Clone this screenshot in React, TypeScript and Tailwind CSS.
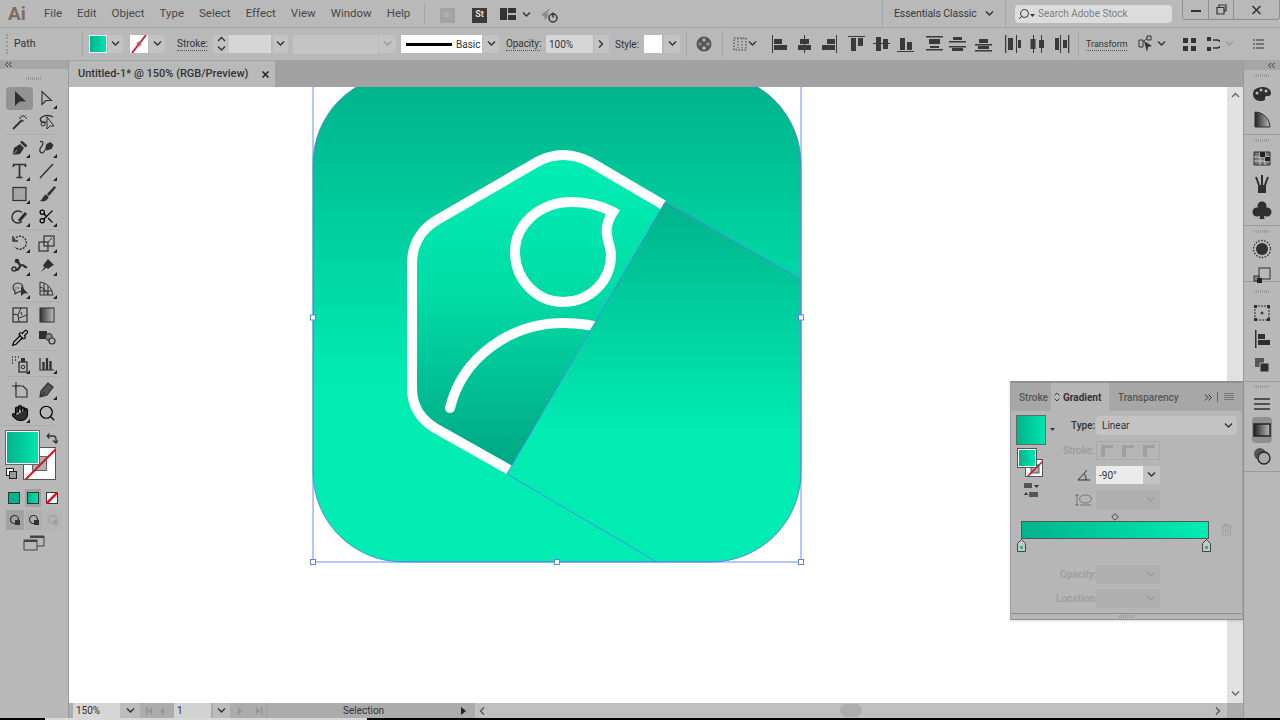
import React from "react";
import { Scissors, Hand, Search, Pipette, Trash2 } from "lucide-react";

const DK = "#2f2f2f";

function Chev({ c = "#333", dir = "down" }: { c?: string; dir?: "down" | "up" | "right" | "left" }) {
  const d = { down: "M1 1.5l3.5 3.5L8 1.5", up: "M1 5l3.5-3.5L8 5", right: "M2 0.5l3.5 3.5L2 7.5", left: "M6 0.5L2.5 4L6 7.5" }[dir];
  return (
    <svg width="9" height="8" viewBox="0 0 9 8" fill="none" className="shrink-0">
      <path d={d} stroke={c} strokeWidth="1.4" />
    </svg>
  );
}

function Sep() {
  return <div className="w-px h-[26px] bg-[#a4a4a4] shrink-0" />;
}

function ChevBox({ className = "", c = "#333" }: { className?: string; c?: string }) {
  return (
    <div className={"h-[18px] bg-[#c3c3c3] flex items-center justify-center rounded-r-sm shrink-0 " + className}>
      <Chev c={c} />
    </div>
  );
}

const Dots = () => <div className="w-[16px] h-[3px] bg-[repeating-linear-gradient(90deg,#9a9a9a_0,#9a9a9a_1px,transparent_1px,transparent_2px)]" />;

function TitleBar() {
  const menu = ["File", "Edit", "Object", "Type", "Select", "Effect", "View", "Window", "Help"];
  return (
    <div className="h-[27px] bg-[#b9b9b9] flex items-center relative shrink-0">
      <div className="w-[44px] pl-[8px] text-[19px] font-bold leading-none text-[#7f6d5a] shrink-0">Ai</div>
      <div className="flex gap-[15px] text-[11.5px] text-[#484848]">
        {menu.map((m) => (
          <span key={m}>{m}</span>
        ))}
      </div>
      <div className="absolute left-[424px] top-[3px] w-px h-[22px] bg-[#a6a6a6]" />
      <div className="absolute left-[440px] top-[6px] flex items-center">
        <div className="w-[15px] h-[15px] bg-[#a3a3a3] text-[8px] font-bold text-[#b5b5b5] flex items-center justify-center">Br</div>
        <div className="ml-[17px] w-[15px] h-[15px] bg-[#3a3a3a] text-[9px] font-bold text-[#ddd] flex items-center justify-center">St</div>
        <svg width="16" height="12" viewBox="0 0 16 12" className="ml-[13px] shrink-0 -mt-[2px]">
          <path d="M0 0h7v12H0zM8 0h8v5H8zM8 7h8v5H8z" fill="#333" />
        </svg>
        <div className="ml-[6px]"><Chev /></div>
        <svg width="18" height="18" viewBox="0 0 18 18" className="ml-[9px] shrink-0">
          <path d="M1 9l9-7-3 6 2 1-4 5-1-4z" fill="#8d8d8d" />
          <circle cx="13" cy="12" r="4" fill="none" stroke="#333" strokeWidth="1.4" />
          <path d="M13 6.5v5" stroke="#333" strokeWidth="1.5" />
        </svg>
      </div>
      <div className="ml-auto flex items-center h-full">
        <Sep />
        <span className="ml-[11px] w-[82px] text-[10.5px] tracking-[-0.1px] text-[#3a3a3a] whitespace-nowrap">Essentials Classic</span>
        <div className="ml-[9px]"><Chev /></div>
        <div className="ml-[11px]"><Sep /></div>
        <div className="ml-[9px] w-[157px] h-[18px] bg-[#dcdcdc] rounded-sm flex items-center pl-[3px]">
          <Search size={12} color="#333" className="-scale-x-100 shrink-0" strokeWidth={2} />
          <svg width="5" height="3" viewBox="0 0 5 3" className="shrink-0 mt-[3px]"><path d="M0 0h5L2.500 3z" fill="#333" /></svg>
          <span className="text-[10px] text-[#808080] ml-[3px] whitespace-nowrap">Search Adobe Stock</span>
        </div>
        <div className="ml-[10px] w-[98px] h-[20px] -mt-[7px] flex border border-t-0 border-[#8e8e8e] rounded-b-sm">
          <div className="w-[26px] flex items-center justify-center border-r border-[#8e8e8e]">
            <div className="w-[10px] h-[2px] bg-[#333] mt-[3px]" />
          </div>
          <div className="w-[25px] flex items-center justify-center border-r border-[#8e8e8e]">
            <svg width="11" height="11" viewBox="0 0 11 11" fill="none"><path d="M3 3V1h7v6H8M1 3.5h7v6.5H1z" stroke="#333" strokeWidth="1.2" /></svg>
          </div>
          <div className="flex-1 flex items-center justify-center">
            <svg width="11" height="10" viewBox="0 0 11 10" fill="none"><path d="M1.5 1l8 8M9.5 1l-8 8" stroke="#333" strokeWidth="1.6" /></svg>
          </div>
        </div>
      </div>
    </div>
  );
}

function Al({ children, className = "" }: { children: React.ReactNode; className?: string }) {
  return (
    <svg width="17" height="18" viewBox="0 0 17 18" className={"shrink-0 " + className} fill="#3a3a3a">
      {children}
    </svg>
  );
}

function ControlBar() {
  return (
    <div className="h-[33px] bg-[#b9b9b9] border-t border-[#a8a8a8] flex items-center shrink-0 text-[10px] text-[#333] whitespace-nowrap">
      <div className="ml-[6px] w-[2px] h-[20px] border-l-2 border-dotted border-[#999] shrink-0" />
      <span className="ml-[6px] w-[68px] shrink-0 text-[10.500px]">Path</span>
      <Sep />
      <div className="ml-[6px] w-[18px] h-[18px] border border-[#eee] bg-gradient-to-r from-[#00b48c] to-[#00e6ae] shrink-0" />
      <ChevBox className="w-[15px] ml-px" />
      <div className="ml-[7px] w-[18px] h-[18px] bg-white overflow-hidden shrink-0">
        <svg width="18" height="18" viewBox="0 0 18 18"><path d="M2 18L16 0" stroke="#e01020" strokeWidth="1.8" /><circle cx="9" cy="9" r="2" fill="none" stroke="#777" /></svg>
      </div>
      <ChevBox className="w-[16px] ml-px" />
      <span className="ml-[12px] w-[30px] shrink-0 border-b border-dotted border-[#555] leading-[12px]">Stroke:</span>
      <div className="ml-[6px] w-[16px] h-[18px] bg-[#c3c3c3] flex flex-col items-center justify-center gap-[1px] shrink-0">
        <Chev dir="up" />
        <Chev />
      </div>
      <div className="w-[42px] h-[18px] bg-[#d6d6d6] shrink-0" />
      <ChevBox className="w-[15px] ml-[2px]" />
      <div className="ml-[5px] w-[85px] h-[19px] bg-[#c4c4c4] shrink-0" />
      <ChevBox className="w-[17px] ml-px bg-[#bdbdbd]" c="#9a9a9a" />
      <div className="ml-[5px] w-[81px] h-[18px] bg-white flex items-center text-[#333] shrink-0">
        <div className="ml-[5px] w-[46px] h-[3px] bg-black" />
        <span className="ml-[4px]">Basic</span>
      </div>
      <ChevBox className="w-[16px] ml-px" />
      <span className="ml-[7px] w-[34px] shrink-0 border-b border-dotted border-[#555] leading-[12px] tracking-[-0.1px]">Opacity:</span>
      <div className="ml-[6px] w-[47px] h-[18px] bg-[#d6d6d6] flex items-center pl-[3px] shrink-0">100%</div>
      <div className="ml-px w-[15px] h-[18px] bg-[#c3c3c3] flex items-center justify-center shrink-0"><Chev dir="right" /></div>
      <span className="ml-[6px] w-[25px] shrink-0">Style:</span>
      <div className="ml-[4px] w-[18px] h-[18px] bg-white shrink-0" />
      <ChevBox className="w-[16px] ml-[2px]" />
      <div className="ml-[6px]"><Sep /></div>
      <svg width="16" height="16" viewBox="0 0 16 16" className="ml-[9px] shrink-0">
        <circle cx="8" cy="8" r="7.5" fill="#555" />
        <circle cx="8" cy="4" r="1.8" fill="#aaa" /><circle cx="4" cy="8" r="1.8" fill="#888" /><circle cx="12" cy="8" r="1.8" fill="#999" /><circle cx="8" cy="12" r="1.8" fill="#bbb" />
      </svg>
      <div className="ml-[10px]"><Sep /></div>
      <svg width="14" height="16" viewBox="0 0 14 16" fill="none" className="ml-[10px] shrink-0">
        <rect x="1" y="2" width="12" height="12" stroke="#333" strokeDasharray="1.5 1.5" />
        <path d="M5 2v12M9 2v12" stroke="#555" strokeDasharray="1.5 1.5" />
      </svg>
      <div className="ml-px"><Chev /></div>
      <Al className="ml-[14px]"><path d="M1 0h1v18H1zM3 4h8v5H3zM3 10h13v5H3z" /></Al>
      <Al className="ml-[8px]"><path d="M8 0h1v18H8zM4 4h9v5H4zM2 10h13v5H2z" /></Al>
      <Al className="ml-[8px]"><path d="M15 0h1v18h-1zM6 4h8v5H6zM1 10h13v5H1z" /></Al>
      <Al className="ml-[10px]"><path d="M0 1h17v1H0zM3 3h5v13H3zM10 3h5v8h-5z" /></Al>
      <Al className="ml-[8px]"><path d="M0 8h17v1H0zM3 2h5v14H3zM10 4h5v10h-5z" /></Al>
      <Al className="ml-[7px]"><path d="M0 16h17v1H0zM3 3h5v12H3zM10 7h5v8h-5z" /></Al>
      <Al className="ml-[12px]"><path d="M0 1h17v1.5H0zM3 4h11v5H3zM0 14h17v1.5H0zM4 11h9v2H4z" /></Al>
      <Al className="ml-[6px]"><path d="M0 6h17v1.5H0zM4 2h9v3H4zM0 11h17v1.5H0zM3 13h11v3H3z" /></Al>
      <Al className="ml-[9px]"><path d="M0 9h17v1.5H0zM4 4h9v4H4zM0 15h17v1.5H0zM3 11h11v3H3z" /></Al>
      <Al className="ml-[12px]"><path d="M1 0h1.3v18H1zM4 3h5v12H4zM12 0h1v18h-1zM14 5h3v8h-3z" /></Al>
      <Al className="ml-[8px]"><path d="M4 0h1v18H4zM1.5 4h5v10h-5zM12 0h1v18h-1zM10 5h5v8h-5z" /></Al>
      <Al className="ml-[7px]"><path d="M7 0h1v18H7zM2 3h4v12H2zM15 0h1.3v18H15zM10 5h4v8h-4z" /></Al>
      <div className="ml-[8px]"><Sep /></div>
      <span className="ml-[7px] w-[41px] shrink-0 border-b border-dotted border-[#555] leading-[12px] text-[9px]">Transform</span>
      <svg width="16" height="18" viewBox="0 0 16 18" fill="none" className="ml-[11px] shrink-0">
        <path d="M1 5h4v7H1zM9 1h4v4H9zM5 7l4-4" stroke="#333" />
        <path d="M6 6l8 5-4 1-1 5z" fill="#333" />
      </svg>
      <div className="ml-[3px]"><Chev /></div>
      <svg width="13" height="13" viewBox="0 0 13 13" fill="#333" className="ml-[17px] shrink-0"><path d="M0 0h5v5H0zM8 0h5v5H8zM0 8h5v5H0zM8 8h5v5H8z" /></svg>
      <svg width="13" height="16" viewBox="0 0 13 16" fill="none" className="ml-[11px] shrink-0">
        <path d="M0 1h4v4H0zM0 11h4v4H0z" fill="#333" /><path d="M6 4h4a3.5 3.5 0 010 8H6" stroke="#333" strokeWidth="1.5" />
      </svg>
      <div className="ml-[5px]"><Chev c="#999" /></div>
      <svg width="11" height="10" viewBox="0 0 11 10" fill="none" className="ml-[19px] shrink-0">
        <path d="M0 1h2M3 1h8M0 5h2M3 5h8M0 9h2M3 9h8" stroke="#333" strokeWidth="1.2" />
      </svg>
    </div>
  );
}

const Corner = () => <path d="M20 20v-4l-4 4z" fill="#222" stroke="none" />;

function Tool({ children, active = false, corner = true }: { children: React.ReactNode; active?: boolean; corner?: boolean }) {
  return (
    <div className={"w-[27px] h-[23px] flex items-center justify-center rounded-sm " + (active ? "bg-[#939393]" : "")}>
      <svg width="20" height="20" viewBox="0 0 20 20" fill="none" stroke={DK} strokeWidth="1.4">
        {children}
        {corner && <Corner />}
      </svg>
    </div>
  );
}

function Row({ children }: { children: React.ReactNode }) {
  return <div className="flex">{children}</div>;
}

function TSep() {
  return <div className="h-[3px] flex items-center"><div className="w-[54px] h-px bg-[#acacac]" /></div>;
}

function LeftToolbar() {
  return (
    <div className="w-[69px] shrink-0 bg-[#b8b8b8] border-r border-[#9a9a9a] flex flex-col">
      <div className="h-[9px] bg-[#a6a6a6] flex items-center pl-[5px]">
        <svg width="7" height="5" viewBox="0 0 7 5" fill="none"><path d="M3 0L.5 2.5 3 5M6.5 0L4 2.5 6.5 5" stroke="#333" /></svg>
      </div>
      <div className="h-[18px] flex items-center justify-center"><Dots /></div>
      <div className="pl-[6px]">
        <Row>
          <Tool active corner={false}><path d="M5 2v15l4.5-4.5h6.500z" fill={DK} stroke="none" /></Tool>
          <Tool><path d="M5 2.500v13l4-4h5.500z" strokeWidth="1.100" /></Tool>
        </Row>
        <Row>
          <Tool corner={false}><path d="M3 17l9-9" strokeWidth="1.800" /><path d="M13 3v2M13 8v2M9 6h2M15 6h2M10.500 3.500L12 5M15.500 3.500L14 5" strokeWidth="1" /></Tool>
          <Tool corner={false}><path d="M9 10C3 11 2 7 5 5c3-2 8-2 11 0" /><circle cx="6" cy="12" r="2" strokeWidth="1" /><path d="M10 5v12l3-3h4z" fill="#b8b8b8" strokeWidth="1" /></Tool>
        </Row>
        <TSep />
        <Row>
          <Tool><path d="M2.500 17l1.500-7 6-4 4 4-4 6z" fill={DK} stroke="none" /><path d="M11 3.500l5.500 5" strokeWidth="2.500" /><path d="M3 17l4-5" stroke="#b8b8b8" strokeWidth=".8" /></Tool>
          <Tool><path d="M8 11l1.500-5 4-2 3 3-2 4-5 1.500z" fill={DK} stroke="none" /><path d="M8 12c-2 5-6 3-5-1 1-3 3-3 3-6 0-2-2-2-3-1" strokeWidth="1.200" /></Tool>
        </Row>
        <Row>
          <Tool><path d="M3 3.500h13M9.500 3.500v13M6.500 16.500h6M3.500 3.500v2.500M15.500 3.500v2.500" strokeWidth="1.700" /></Tool>
          <Tool><path d="M3 17L16 3" /></Tool>
        </Row>
        <Row>
          <Tool><rect x="3" y="3.500" width="13" height="13" fill="#a6a6a6" strokeWidth="1.200" /></Tool>
          <Tool corner={false}><path d="M17.500 2l-7.500 8 2 2 7-8.500z" fill={DK} stroke="none" /><path d="M9.500 10.500c-3 0-3 4-6.500 6.500 4 .8 8-.5 8.500-4z" fill={DK} stroke="none" /></Tool>
        </Row>
        <Row>
          <Tool><path d="M12 5.500a6 6 0 1 0 0 9" strokeWidth="1.500" /><path d="M9 14l7-8" strokeWidth="3" /></Tool>
          <Tool><Scissors x="1" y="1" width="17" height="17" strokeWidth={1.800} /></Tool>
        </Row>
        <TSep />
        <Row>
          <Tool><path d="M4 7a6.500 6.500 0 1 1 1 7" strokeDasharray="2 1.200" /><path d="M3 3v5h5" strokeWidth="1.400" /></Tool>
          <Tool><rect x="2" y="9" width="9" height="9" strokeWidth="1.200" /><rect x="7" y="3" width="10" height="10" strokeWidth="1.200" /><path d="M11 9l4-4" strokeWidth="1" /></Tool>
        </Row>
        <Row>
          <Tool><circle cx="4" cy="13" r="2" strokeWidth="1.500" /><path d="M6 14c4 0 3-5 6-5s2 3 5 2M7 5l3 4" strokeWidth="2.200" /><circle cx="7" cy="5" r="1.600" fill={DK} /></Tool>
          <Tool><path d="M11 3l6 6-2 1-4 3-1.500-1.500L4 16l3.500-5L6 9.500l3-4z" fill={DK} stroke="none" /></Tool>
        </Row>
        <Row>
          <Tool><path d="M3 9c0-3 2-5 5-5s5 2 5 5-2 4-5 4l-3 2v-3c-1-1-2-2-2-3z" strokeWidth="1.100" /><path d="M11 7v10l3-2.500h4z" fill={DK} stroke="none" /><path d="M5.500 9h1M8 9h1" /></Tool>
          <Tool><path d="M3 3v13h13M3 3c7 1 12 6 13 13M3 8c4 1 7 4 8 8M7 4v12M11 7v9M3 12h12" strokeWidth="1" /></Tool>
        </Row>
        <TSep />
        <Row>
          <Tool corner={false}><rect x="3" y="3" width="14" height="14" strokeWidth="1.200" /><path d="M3 9l5 1 3-7M8 10l1 7M9 13l8-3M12 10l-1-3" strokeWidth="1" /></Tool>
          <Tool corner={false}><defs><linearGradient id="tg" x1="0" x2="1" y1="0" y2="0"><stop offset="0" stopColor="#333" /><stop offset="1" stopColor="#c0c0c0" /></linearGradient></defs><rect x="3" y="3" width="14" height="14" fill="url(#tg)" strokeWidth="1" /></Tool>
        </Row>
        <Row>
          <Tool corner={false}><Pipette x="1" y="1" width="18" height="18" strokeWidth={1.600} /></Tool>
          <Tool corner={false}><rect x="2" y="3" width="8" height="8" fill={DK} stroke="none" /><circle cx="12" cy="9" r="3.500" fill="#888" strokeWidth="1" /><circle cx="15" cy="13" r="3" fill="#b8b8b8" strokeWidth="1.200" /></Tool>
        </Row>
        <TSep />
        <Row>
          <Tool><rect x="9" y="8" width="8" height="10" strokeWidth="1.300" /><circle cx="13" cy="13" r="1.800" strokeWidth="1" /><path d="M11 4h4v4h-4z" fill={DK} stroke="none" /><path d="M2 3h1M5 3h1M8 3h1M2 6h1M5 6h1M2 9h1" strokeWidth="1.300" /></Tool>
          <Tool><path d="M3 4v12h14" strokeWidth="1.200" /><path d="M6.500 8v8M10 4v12M13.500 7v9" strokeWidth="2.300" /></Tool>
        </Row>
        <TSep />
        <Row>
          <Tool corner={false}><path d="M6 2v8M2 6h8" strokeWidth="1" /><path d="M6 6h7l4 4v7H6z" fill="#b8b8b8" strokeWidth="1.200" /></Tool>
          <Tool><path d="M3 17l1-6 7-8 5 4-6 8zM3 17l5-5" fill="#555" strokeWidth="1.200" /></Tool>
        </Row>
        <Row>
          <Tool><Hand x="1" y="1" width="18" height="18" fill={DK} strokeWidth={1.400} /></Tool>
          <Tool corner={false}><Search x="1" y="1" width="18" height="18" strokeWidth={1.600} /></Tool>
        </Row>
      </div>
      <TSep />
      <div className="relative h-[56px] mt-[4px]">
        <div className="absolute left-[23px] top-[16px] w-[33px] h-[33px] bg-white border border-[#555] overflow-hidden">
          <div className="absolute left-[8px] top-[8px] w-[15px] h-[15px] border border-[#666] bg-[#b0b0b0]" />
          <svg width="33" height="33" viewBox="0 0 33 33" className="absolute left-0 top-0"><path d="M0 33L33 0" stroke="#e01020" strokeWidth="2" /></svg>
        </div>
        <div className="absolute left-[6px] top-0 w-[33px] h-[33px] border border-white outline outline-[#666] bg-gradient-to-r from-[#00b48c] to-[#00e6ae]" />
        <svg width="12" height="12" viewBox="0 0 12 12" fill="none" className="absolute left-[46px] top-[1px]"><path d="M1 4h6a3 3 0 013 3v4M1 4l2.500-2.500M1 4l2.500 2.500M7 8.500l3 2.500 2-2.500" stroke="#333" strokeWidth="1.300" /></svg>
        <svg width="11" height="11" viewBox="0 0 11 11" className="absolute left-[6px] top-[37px]"><rect x=".5" y=".5" width="7" height="7" fill="#fff" stroke="#222" /><rect x="3.500" y="3.500" width="7" height="7" fill="#999" stroke="#222" /></svg>
      </div>
      <div className="mt-[2px] h-[18px] flex items-center pl-[6px] gap-[3px]">
        <div className="w-[16px] h-[18px] flex items-center justify-center"><div className="w-[12px] h-[12px] bg-[#00b48c] border border-[#333]" /></div>
        <div className="w-[16px] h-[18px] flex items-center justify-center bg-[#a2a2a2]"><div className="w-[12px] h-[12px] bg-gradient-to-r from-[#00b48c] to-[#00e6ae] border border-[#333]" /></div>
        <div className="w-[16px] h-[18px] flex items-center justify-center"><svg width="12" height="12" viewBox="0 0 12 12"><rect x=".5" y=".5" width="11" height="11" fill="#fff" stroke="#333" /><path d="M0 12L12 0" stroke="#e01020" strokeWidth="2.500" /></svg></div>
      </div>
      <div className="mt-[3px] h-[20px] mx-[6px] flex gap-px">
        {[0, 1, 2].map((i) => (
          <div key={i} className={"w-[18px] h-[20px] flex items-center justify-center " + (i === 0 ? "bg-[#a2a2a2]" : i === 1 ? "bg-[#b0b0b0]" : "bg-[#b4b4b4]")}>
            <svg width="12" height="12" viewBox="0 0 12 12" fill="none">
              <circle cx="5.500" cy="5.500" r="4" stroke={i === 2 ? "#a0a0a0" : "#333"} strokeWidth="1.200" />
              <rect x="6" y="6" width="5" height="5" fill={i === 2 ? "#a0a0a0" : "#333"} />
            </svg>
          </div>
        ))}
      </div>
      <div className="mt-[5px] flex justify-center">
        <svg width="22" height="16" viewBox="0 0 22 16" fill="none" className="-ml-[1px]">
          <path d="M7 1h14v10H14" stroke="#444" /><path d="M7 1h14v2H7z" fill="#444" />
          <rect x="1" y="5" width="13" height="10" fill="#b8b8b8" stroke="#444" /><rect x="1" y="5" width="13" height="2" fill="#444" />
        </svg>
      </div>
    </div>
  );
}

function TabBar() {
  return (
    <div className="h-[27px] bg-[#a2a2a2] flex shrink-0">
      <div className="w-[206px] h-[26px] mt-px bg-[#b9b9b9] flex items-center pl-[9px] text-[11px] font-medium text-[#333] whitespace-nowrap">
        <span className="w-[169px]">Untitled-1* @ 150% (RGB/Preview)</span>
        <svg width="7" height="7" viewBox="0 0 7 7" className="ml-[15px]"><path d="M.5.5l6 6M6.500.5l-6 6" stroke="#222" strokeWidth="1.500" /></svg>
      </div>
    </div>
  );
}

function Art() {
  const handles: [number, number][] = [[313, 317.500], [801, 317.500], [313, 562], [557, 562], [801, 562]];
  return (
    <svg viewBox="69 87 1158 616" className="w-full h-full block">
      <defs>
        <linearGradient id="bgG" gradientUnits="userSpaceOnUse" x1="0" x2="0" y1="87" y2="385">
          <stop offset="0" stopColor="#00b48c" />
          <stop offset="1" stopColor="#00ecb3" />
        </linearGradient>
        <linearGradient id="shG" gradientUnits="userSpaceOnUse" x1="0" x2="0" y1="205" y2="430">
          <stop offset="0" stopColor="#00b48c" />
          <stop offset="1" stopColor="#00ecb3" />
        </linearGradient>
        <linearGradient id="hxG" gradientUnits="userSpaceOnUse" x1="0" x2="0" y1="175" y2="470">
          <stop offset="0" stopColor="#00ecb3" />
          <stop offset="0.4" stopColor="#00dca6" />
          <stop offset="1" stopColor="#00a684" />
        </linearGradient>
        <clipPath id="sq"><rect x="313" y="74" width="488" height="488" rx="90" /></clipPath>
        <clipPath id="lf"><path d="M700 142L480 520H300V100H700z" /></clipPath>
      </defs>
      <rect x="313" y="74" width="488" height="488" rx="90" fill="url(#bgG)" />
      <g clipPath="url(#sq)">
        <path d="M665 202L801 279V562H657L507 474z" fill="url(#shG)" />
      </g>
      <g clipPath="url(#lf)">
        <path d="M672 209L590 162Q563 148 537 162L437 220Q412 235 412 264V388Q412 414 435 428L520 477z" fill="url(#hxG)" />
        <path d="M672 210L590 162Q563 148 537 162L437 220Q412 235 412 264V388Q412 414 435 428L520 476" fill="none" stroke="#fff" strokeWidth="10" />
        <path d="M450 408C462 358 510 323 563 323C578 323 594 325 610 330" fill="none" stroke="#fff" strokeWidth="10" />
      </g>
      <path d="M613 212C598 204 585 202 572 202C538 202 515 226 515 252C515 280 537 302 563 302C590 302 611 281 611 255C611 243 600 232 613 212Z" fill="none" stroke="#fff" strokeWidth="10" strokeMiterlimit="6" />
      <path d="M450 408l.01 0" fill="none" stroke="#fff" strokeWidth="10" strokeLinecap="round" />
      <g fill="none" stroke="#5b82e6" strokeWidth=".9">
        <rect x="313" y="74" width="488" height="488" rx="90" />
        <path d="M313 87V562H801V87" />
        <path d="M665 202L801 279M507 474L657 562M507 474L665 202" />
      </g>
      {handles.map(([x, y]) => (
        <rect key={x + "-" + y} x={x - 2.500} y={y - 2.500} width="5" height="5" fill="#fff" stroke="#5b82e6" />
      ))}
    </svg>
  );
}

function StatusBar() {
  return (
    <div className="h-[15px] flex text-[10px] text-[#333] shrink-0 whitespace-nowrap">
      <div className="w-[406px] h-full bg-[#acacac] flex items-center shrink-0">
        <div className="ml-[4px] w-[47px] h-full bg-[#d6d6d6] pl-[3px] flex items-center">150%</div>
        <div className="w-[20px] h-full bg-[#bcbcbc] flex items-center justify-center"><Chev /></div>
        <svg width="28" height="8" viewBox="0 0 28 8" className="ml-[6px]" fill="#949494"><path d="M0 0h1.500v8H0zM6 0v8L2 4zM18 0v8l-4-4z" /></svg>
        <div className="w-[37px] h-full bg-[#d2d2d2] pl-[3px] flex items-center">1</div>
        <div className="ml-[2px] w-[17px] h-full bg-[#bcbcbc] flex items-center justify-center"><Chev /></div>
        <svg width="28" height="8" viewBox="0 0 28 8" className="ml-[6px]" fill="#949494"><path d="M2 0v8l4-4zM20 0v8l4-4zM25 0h1.500v8H25z" /></svg>
        <div className="ml-[2px] w-px h-full bg-[#a0a0a0]" />
        <span className="ml-[76px] w-[118px]">Selection</span>
        <svg width="5" height="8" viewBox="0 0 5 8" fill="#222"><path d="M0 0l5 4-5 4z" /></svg>
      </div>
      <div className="flex-1 bg-[#c0c0c0] flex items-center pl-[3px]">
        <Chev dir="left" c="#555" />
        <div className="ml-[353px] w-[22px] h-[13px] rounded-full bg-[#adadad]" />
        <div className="ml-auto mr-[4px]"><Chev dir="right" c="#555" /></div>
      </div>
      <div className="w-[16px] bg-[#acacac]" />
    </div>
  );
}

function DockIcon({ children, active = false }: { children: React.ReactNode; active?: boolean }) {
  return (
    <div className={"h-[26px] shrink-0 flex items-center justify-center mx-[8px] rounded-sm " + (active ? "bg-[#8f8f8f]" : "")}>
      <svg width="20" height="20" viewBox="0 0 20 20" fill="none" stroke={DK}>{children}</svg>
    </div>
  );
}

function DockGroup({ children, h, head = "h-[10px]" }: { children: React.ReactNode; h: string; head?: string }) {
  return (
    <div className={"border-b border-[#9c9c9c] flex flex-col shrink-0 " + h}>
      <div className={"flex items-center justify-center shrink-0 " + head}><Dots /></div>
      {children}
    </div>
  );
}

function RightDock() {
  return (
    <div className="w-[37px] shrink-0 bg-[#b8b8b8] border-l border-[#9a9a9a] flex flex-col">
      <div className="h-[10px] bg-[#a6a6a6] flex items-center justify-end pr-[5px] shrink-0">
        <svg width="7" height="5" viewBox="0 0 7 5" fill="none"><path d="M3 0L.5 2.500 3 5M6.500 0L4 2.500 6.500 5" stroke="#333" /></svg>
      </div>
      <DockGroup h="h-[65px]">
        <DockIcon><path d="M1 11c0-5 5-7 10-7s8 3 8 6-2 3-4 3-2 1-2 3-3 2-5 2c-4 0-7-3-7-7z" fill={DK} stroke="none" /><circle cx="5" cy="10" r="1.500" fill="#bbb" stroke="none" /><circle cx="9" cy="7" r="1.500" fill="#bbb" stroke="none" /><circle cx="14" cy="8" r="1.500" fill="#bbb" stroke="none" /></DockIcon>
        <DockIcon><defs><linearGradient id="dq" x1="0" x2="1" y1="0" y2="0"><stop offset="0" stopColor="#222" /><stop offset="1" stopColor="#bbb" /></linearGradient></defs><path d="M3 18V3c8 0 15 7 15 15z" fill="url(#dq)" strokeWidth="1" /></DockIcon>
      </DockGroup>
      <DockGroup h="h-[91px]">
        <DockIcon><path d="M2 4h16v13H2z" fill="#777" strokeWidth="1" /><path d="M2 9h16M2 13h16M8 4v13M13 4v13" stroke="#ccc" /><path d="M8 4h5v5H8zM13 9h5v4h-5z" fill="#222" stroke="none" /></DockIcon>
        <DockIcon><path d="M6 11h8v8H6z" fill={DK} stroke="none" /><path d="M7 11L4 3M10 11V1M13 11l3-8" strokeWidth="2" /></DockIcon>
        <DockIcon><g fill={DK} stroke="none"><circle cx="10" cy="6" r="4.500" /><circle cx="5" cy="12" r="4.500" /><circle cx="15" cy="12" r="4.500" /><path d="M9 10h2l1.500 9h-5z" /></g></DockIcon>
      </DockGroup>
      <DockGroup h="h-[56px]">
        <DockIcon><circle cx="10" cy="10" r="6" fill={DK} stroke="none" /><circle cx="10" cy="10" r="8.500" strokeDasharray="1.500 1.500" strokeWidth="1.300" /></DockIcon>
        <DockIcon><rect x="7" y="3" width="11" height="11" strokeWidth="1" /><rect x="2" y="11" width="5" height="5" fill="#888" /><rect x="5" y="13" width="5" height="5" fill="#222" stroke="none" /></DockIcon>
      </DockGroup>
      <DockGroup h="h-[100px]" head="h-[18px]">
        <DockIcon><rect x="3" y="3" width="14" height="14" strokeDasharray="2 1" strokeWidth="1" /><path d="M2 2h3v3H2zM15 2h3v3h-3zM2 15h3v3H2zM15 15h3v3h-3z" fill={DK} stroke="none" /><circle cx="10" cy="10" r="1" fill={DK} /></DockIcon>
        <DockIcon><path d="M3 1h1.500v18H3zM6 5h7v5H6zM6 11h12v5H6z" fill={DK} stroke="none" /></DockIcon>
        <DockIcon><path d="M3 3h9v9H3z" fill="#555" stroke="none" /><path d="M8 8h9v9H8z" fill={DK} stroke="#b8b8b8" /></DockIcon>
      </DockGroup>
      <DockGroup h="h-[90px]" head="h-[9px]">
        <DockIcon><path d="M2 5h16M2 10h16M2 15h16" strokeWidth="1.700" /></DockIcon>
        <DockIcon active><defs><linearGradient id="dg" x1="0" x2="1" y1="0" y2="0"><stop offset="0" stopColor="#222" /><stop offset="1" stopColor="#bbb" /></linearGradient></defs><rect x="2" y="4" width="16" height="12" fill="url(#dg)" stroke="#222" strokeWidth="1.500" /></DockIcon>
        <DockIcon><circle cx="8" cy="8" r="6" fill="#555" stroke="none" /><circle cx="12" cy="12" r="6" fill="#aaa" stroke="#222" strokeWidth="1.300" /></DockIcon>
      </DockGroup>
    </div>
  );
}

function Disabled({ className = "" }: { className?: string }) {
  return (
    <div className={"w-[64px] h-[19px] bg-[#afafaf] flex items-center justify-end pr-[5px] " + className}>
      <Chev c="#9b9b9b" />
    </div>
  );
}

function GradientPanel() {
  return (
    <div className="absolute left-[1010px] top-[381px] w-[233px] h-[239px] bg-[#b6b6b6] border-t-2 border-[#8f8f8f] border-x border-b border-x-[#a0a0a0] border-b-[#8f8f8f] shadow-sm text-[10px] text-[#333] whitespace-nowrap">
      <div className="h-[28px] bg-[#a7a7a7] flex items-center relative">
        <span className="ml-[8px] font-medium text-[#555] w-[32px]">Stroke</span>
        <div className="w-[58px] h-full bg-[#b6b6b6] flex items-center pl-[3px] gap-[3px] font-bold">
          <svg width="6" height="10" viewBox="0 0 6 10" fill="none"><path d="M.5 3.500L3 1l2.500 2.500M.5 6.500L3 9l2.500-2.500" stroke="#444" /></svg>
          <span>Gradient</span>
        </div>
        <span className="ml-[9px] w-[57px] font-medium text-[#555]">Transparency</span>
        <svg width="8" height="7" viewBox="0 0 8 7" fill="none" className="ml-[29px]"><path d="M1 .5l3 3-3 3M4.500.5l3 3-3 3" stroke="#333" /></svg>
        <div className="ml-[5px] w-px h-[10px] bg-[#666]" />
        <svg width="10" height="8" viewBox="0 0 10 8" className="ml-[6px]"><path d="M0 .5h10M0 2.500h10M0 4.500h10M0 6.500h10" stroke="#777" /></svg>
      </div>
      <div className="relative flex">
        <div className="w-[85px] shrink-0 pl-[5px] pt-[4px] h-[104px]">
          <div className="flex items-end">
            <div className="w-[30px] h-[30px] border border-[#666] bg-gradient-to-r from-[#00b48c] to-[#00e6ae]" />
            <svg width="5" height="3" viewBox="0 0 5 3" className="ml-[4px] mb-[14px]"><path d="M0 0h5L2.500 3z" fill="#333" /></svg>
          </div>
          <div className="relative mt-[4px] h-[30px] w-[30px]">
            <div className="absolute left-[9px] top-[10px] w-[18px] h-[18px] bg-white border border-[#555] overflow-hidden">
              <svg width="18" height="18" viewBox="0 0 18 18"><rect x="5" y="5" width="8" height="8" fill="#aaa" stroke="#555" /><path d="M0 18L18 0" stroke="#d01020" strokeWidth="1.500" /></svg>
            </div>
            <div className="absolute left-[2px] top-0 w-[18px] h-[18px] border border-white outline outline-[#555] bg-gradient-to-r from-[#00b48c] to-[#00e6ae]" />
          </div>
          <svg width="15" height="14" viewBox="0 0 15 14" className="ml-[8px] mt-[4px]">
            <path d="M0 0h8v5H0z" fill="#555" /><path d="M10 2h5l-2.500 3z" fill="#333" /><path d="M5 9h9v5H5z" fill="#555" /><path d="M0 12h4L2 9z" fill="#333" />
          </svg>
        </div>
        <div className="flex-1 pt-[5px]">
          <div className="flex items-center">
            <span className="w-0 -ml-[25px] mr-[25px] font-medium">Type:</span>
            <div className="w-[141px] h-[19px] bg-[#c3c3c3] rounded-sm flex items-center pl-[6px] justify-between pr-[4px]">
              <span>Linear</span>
              <Chev />
            </div>
          </div>
          <div className="flex items-center h-[19px] mt-[6px]">
            <span className="w-0 -ml-[33px] mr-[33px] text-[#9c9c9c] font-medium">Stroke:</span>
            <div className="flex gap-px border border-[#a9a9a9] h-[19px] items-center">
              {["a", "b", "c"].map((k) => (
                <div key={k} className="w-[20px] flex justify-center">
                  <svg width="14" height="14" viewBox="0 0 14 14" fill="none"><path d="M1 13V1h12v3H5v9z" fill="#a0a0a0" /></svg>
                </div>
              ))}
            </div>
          </div>
          <div className="flex items-center h-[18px] mt-[6px]">
            <svg width="14" height="12" viewBox="0 0 14 12" fill="none" className="-ml-[19px] mr-[5px] shrink-0"><path d="M13 11H1L10 1M7 5c1.500 1 2 3 2 6" stroke="#333" /></svg>
            <div className="w-[47px] h-[18px] bg-[#ebebeb] flex items-center pl-[3px]">-90°</div>
            <div className="w-[17px] h-[18px] bg-[#c3c3c3] flex items-center justify-center"><Chev /></div>
          </div>
          <div className="flex items-center h-[19px] mt-[6px]">
            <svg width="17" height="14" viewBox="0 0 17 14" fill="none" className="-ml-[21px] mr-[4px] shrink-0"><path d="M2 1v12M.5 3L2 1l1.500 2M.5 11L2 13l1.500-2" stroke="#777" /><ellipse cx="10.500" cy="6" rx="6" ry="4" stroke="#777" /><path d="M5 12h11" stroke="#777" /></svg>
            <Disabled />
          </div>
        </div>
      </div>
      <div className="relative h-[40px]">
        <svg width="8" height="8" viewBox="0 0 8 8" fill="none" className="absolute left-[100px] -top-[2px]"><path d="M4 .7L7.300 4 4 7.300.7 4z" stroke="#444" /></svg>
        <div className="absolute left-[10px] top-[6px] w-[188px] h-[18px] border border-[#555] bg-gradient-to-r from-[#00b48c] to-[#00edb3]" />
        {["left-[6px]", "left-[191px]"].map((p) => (
          <svg key={p} width="9" height="13" viewBox="0 0 9 13" className={"absolute top-[24px] " + p}>
            <path d="M.5 4.500L4.500.5l4 4v8h-8z" fill="#c8c8c8" stroke="#444" />
            <rect x="3" y="7" width="3" height="3" fill="#00c89c" />
          </svg>
        ))}
        <div className="absolute left-[209px] top-[8px]"><Trash2 size={13} color="#9d9d9d" /></div>
      </div>
      <div className="pl-[85px] mt-[10px] flex flex-col gap-[5px] text-[#9c9c9c] font-medium">
        <div className="flex items-center">
          <span className="w-0 -ml-[36px] mr-[36px]">Opacity:</span>
          <Disabled />
        </div>
        <div className="flex items-center">
          <span className="w-0 -ml-[40px] mr-[40px]">Location:</span>
          <Disabled />
        </div>
      </div>
      <div className="absolute left-0 right-0 bottom-0 h-[6px] border-t border-[#8f8f8f] flex items-center justify-center"><Dots /></div>
    </div>
  );
}

export default function App() {
  return (
    <div className="relative w-[1280px] h-[720px] overflow-hidden bg-[#b8b8b8] flex flex-col font-['Roboto',sans-serif]">
      <TitleBar />
      <ControlBar />
      <div className="flex flex-1 min-h-0">
        <LeftToolbar />
        <div className="flex-1 min-w-0 flex flex-col">
          <TabBar />
          <div className="flex-1 min-h-0 flex">
            <div className="flex-1 min-w-0 bg-white"><Art /></div>
            <div className="w-[16px] bg-[#e2e2e2] flex flex-col items-center justify-between py-[5px]">
              <Chev dir="up" c="#666" />
              <Chev c="#666" />
            </div>
          </div>
          <StatusBar />
        </div>
        <RightDock />
      </div>
      <div className="h-[2px] flex shrink-0 bg-black">
        <div className="ml-[45px] w-[322px] bg-[#d8d8d8]" />
      </div>
      <GradientPanel />
    </div>
  );
}
